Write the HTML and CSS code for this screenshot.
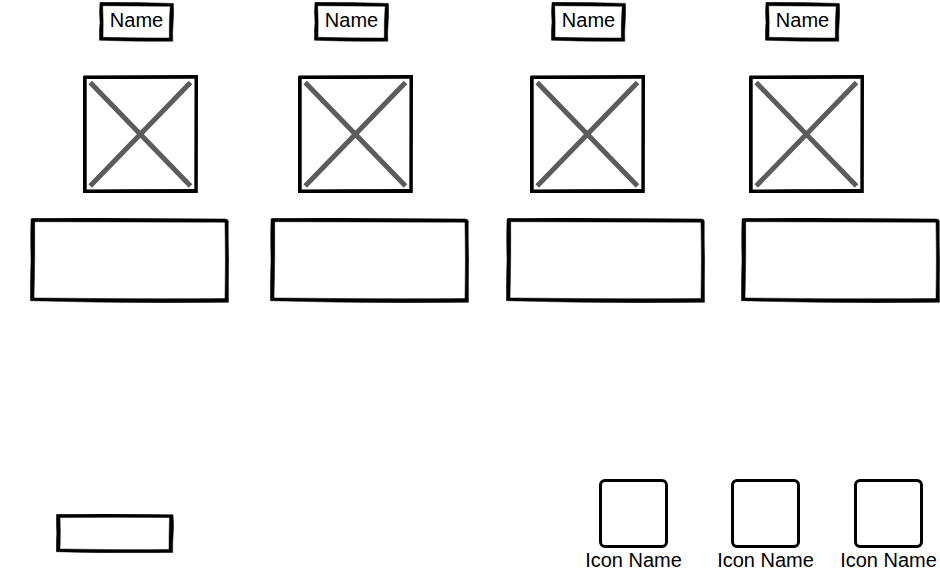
FILE: index.html
```html
<!DOCTYPE html>
<html lang="en">
<head>
<meta charset="utf-8">
<meta name="viewport" content="width=device-width, initial-scale=1">
<title>Wireframe</title>
<link rel="stylesheet" href="styles.css">
</head>
<body>
<svg class="defs" aria-hidden="true">
  <symbol id="tag" viewBox="0 0 75 40">
    <path stroke="#000" stroke-width=".5" fill-rule="evenodd" d="M1 .3Q25 0 38 .6Q55 1 74.400 1.400Q75 12 74.200 20Q73.300 30 73.800 39.200Q38 39.800 .4 38.200Q.2 28 1 20Q0 10 1 .3ZM3.700 3.700Q4.400 20 4 35.300Q38 36.200 70.300 36Q70 20 71.200 4.200Q38 4 3.700 3.700Z"/>
  </symbol>
  <symbol id="photo" viewBox="0 0 115 118">
    <path fill-rule="evenodd" d="M0 1.500L1 .6L55 .3L115 0L114.800 118L0 118ZM3.700 4L3.700 114.600L40 114.300L111.300 114L111.500 3.700L50 4Z"/>
    <path d="M7.200 7.500L107.500 111M107.500 7.500L7.200 111" fill="none" stroke="#5c5c5c" stroke-width="5"/>
  </symbol>
  <symbol id="panel" viewBox="0 0 199 85">
    <path stroke="#000" stroke-width=".5" fill-rule="evenodd" d="M1 1.500Q1 .4 3 .3Q80 -.4 120 .5L195 1Q198 1 198.300 3Q198 25 198.700 42Q198.200 65 198.500 84.300Q110 85.300 40 83.600L.4 82.700Q.4 60 1 42Q.4 20 1 1.500ZM4.700 3.700Q5 42 4 80Q100 81.200 195 80.600Q195.800 42 195 4.200Q100 4 4.700 3.700Z"/>
  </symbol>
  <symbol id="bar" viewBox="0 0 118 39">
    <path stroke="#000" stroke-width=".5" fill-rule="evenodd" d="M.5 .3Q50 -.2 80 .2L117 .8Q118 12 117.200 20Q116.400 30 116.700 38.600Q60 39.200 20 38.200L.3 37.700Q.2 28 .8 19Q.2 10 .5 .3ZM4 3.500Q4.600 20 4 35Q60 36 113 35.400Q113 20 113.500 3.500Q60 3.200 4 3.500Z"/>
  </symbol>
</svg>
<main class="people">
  <div class="row names">
    <h2 class="name"><svg class="frame"><use href="#tag"/></svg><span>Name</span></h2>
    <h2 class="name"><svg class="frame"><use href="#tag"/></svg><span>Name</span></h2>
    <h2 class="name"><svg class="frame"><use href="#tag"/></svg><span>Name</span></h2>
    <h2 class="name"><svg class="frame"><use href="#tag"/></svg><span>Name</span></h2>
  </div>
  <div class="row photos">
    <svg class="photo"><use href="#photo"/></svg>
    <svg class="photo"><use href="#photo"/></svg>
    <svg class="photo"><use href="#photo"/></svg>
    <svg class="photo"><use href="#photo"/></svg>
  </div>
  <div class="row panels">
    <svg class="panel"><use href="#panel"/></svg>
    <svg class="panel"><use href="#panel"/></svg>
    <svg class="panel"><use href="#panel"/></svg>
    <svg class="panel"><use href="#panel"/></svg>
  </div>
</main>
<footer class="footer">
  <svg class="bar"><use href="#bar"/></svg>
  <div class="icons">
    <figure class="icon"><div class="tile"></div><figcaption>Icon Name</figcaption></figure>
    <figure class="icon"><div class="tile"></div><figcaption>Icon Name</figcaption></figure>
    <figure class="icon"><div class="tile"></div><figcaption>Icon Name</figcaption></figure>
  </div>
</footer>
</body>
</html>
```
FILE: styles.css
```css
* {
  box-sizing: border-box;
}

body {
  display: flex;
  flex-direction: column;
  min-height: 100vh;
  margin: 0;
  background: #fff;
  color: #000;
  font: 20px/20px "Liberation Sans", Arial, sans-serif;
}

svg {
  display: block;
}

.defs {
  position: absolute;
  width: 0;
  height: 0;
}

.people {
  padding-top: 2px;
}

.row {
  display: grid;
}

.names {
  grid-template-columns: 215fr 237fr 214fr 175fr;
  padding-left: 99px;
}

.photos {
  grid-template-columns: 215fr 232fr 219fr 191fr;
  margin-top: 33px;
  padding-left: 83px;
}

.panels {
  grid-template-columns: 240fr 236fr 235fr 199fr;
  margin-top: 25px;
  padding-left: 30px;
}

.name {
  position: relative;
  width: 75px;
  height: 40px;
  margin: 0;
  padding-top: 8px;
  font-size: 20px;
  font-weight: 400;
  text-align: center;
}

.frame {
  position: absolute;
  inset: 0;
  width: 100%;
  height: 100%;
}

.photo {
  width: 115px;
  height: 118px;
}

.panel {
  width: 199px;
  height: 85px;
}

.footer {
  display: flex;
  align-items: flex-end;
  justify-content: space-between;
  margin-top: auto;
  padding: 0 3px 0 56px;
}

.bar {
  width: 118px;
  height: 39px;
  margin-bottom: 17px;
}

.icons {
  display: grid;
  grid-template-columns: 132px 123px 97px;
}

.icon {
  display: flex;
  flex-direction: column;
  align-items: center;
  gap: 2px;
  width: 97px;
  margin: 0;
  white-space: nowrap;
}

.tile {
  width: 69px;
  height: 69px;
  border: 3px solid #000;
  border-radius: 6px;
}
```
